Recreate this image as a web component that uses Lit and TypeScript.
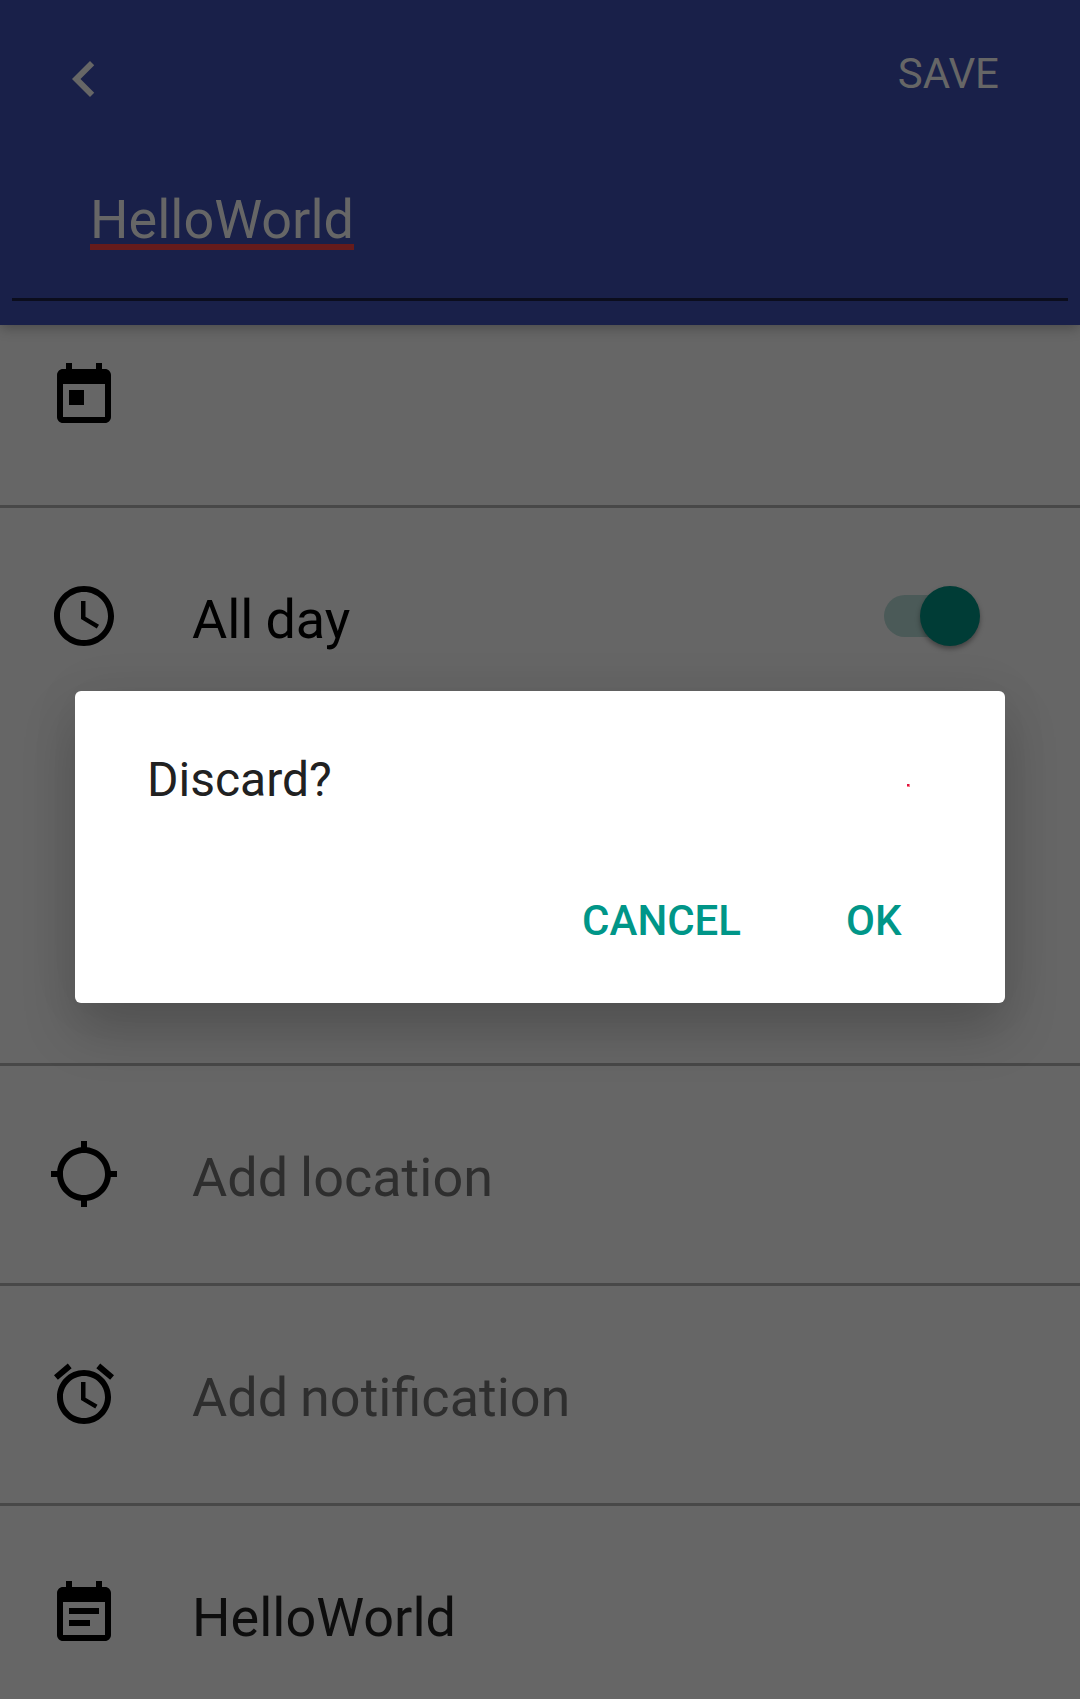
import { LitElement, html, css, svg } from "lit";
import { customElement } from "lit/decorators.js";

const paths = {
  back: "M15.41 7.41L14 6l-6 6 6 6 1.41-1.41L10.83 12z",
  today: "M19 3h-1V1h-2v2H8V1H6v2H5c-1.11 0-1.99.9-1.99 2L3 19c0 1.1.89 2 2 2h14c1.1 0 2-.9 2-2V5c0-1.1-.9-2-2-2zm0 16H5V8h14v11zM7 10h5v5H7z",
  clock: "M11.99 2C6.47 2 2 6.48 2 12s4.47 10 9.99 10C17.52 22 22 17.52 22 12S17.52 2 11.99 2zM12 20c-4.42 0-8-3.58-8-8s3.58-8 8-8 8 3.58 8 8-3.58 8-8 8zm.5-13H11v6l5.25 3.15.75-1.23-4.5-2.67z",
  location: "M20.94 11c-.46-4.17-3.77-7.48-7.94-7.94V1h-2v2.06C6.83 3.52 3.52 6.83 3.06 11H1v2h2.06c.46 4.17 3.77 7.48 7.94 7.94V23h2v-2.06c4.17-.46 7.48-3.77 7.94-7.94H23v-2h-2.06zM12 19c-3.87 0-7-3.13-7-7s3.13-7 7-7 7 3.13 7 7-3.13 7-7 7z",
  alarm: "M22 5.72l-4.6-3.86-1.29 1.53 4.6 3.86L22 5.72zM7.88 3.39L6.6 1.86 2 5.71l1.29 1.53 4.59-3.85zM12.5 8H11v6l4.75 2.85.75-1.23-4-2.37V8zM12 4c-4.97 0-9 4.03-9 9s4.02 9 9 9c4.97 0 9-4.03 9-9s-4.03-9-9-9zm0 16c-3.87 0-7-3.13-7-7s3.13-7 7-7 7 3.13 7 7-3.13 7-7 7z",
  note: "M17 10H7v2h10v-2zm2-7h-1V1h-2v2H8V1H6v2H5c-1.11 0-1.99.9-1.99 2L3 19c0 1.1.89 2 2 2h14c1.1 0 2-.9 2-2V5c0-1.1-.9-2-2-2zm0 16H5V8h14v11zm-5-5H7v2h7v-2z",
};

const icon = (name: keyof typeof paths, cls = "") =>
  html`<svg class="icon ${cls}" viewBox="0 0 24 24">${svg`<path d=${paths[name]}></path>`}</svg>`;

@customElement("app-root")
export class AppRoot extends LitElement {
  static styles = css`
    :host { display: block; font-family: Roboto, sans-serif; }
    * { box-sizing: border-box; }
    .screen { position: relative; height: 1699px; overflow: hidden; background: #666; display: flex; flex-direction: column; }
    .header { height: 325px; flex: none; background: #192049; color: #666; padding: 0 12px; box-shadow: 0 4px 12px -1px rgba(0,0,0,.28); z-index: 1; }
    .bar { height: 158px; display: flex; justify-content: space-between; padding: 43px 69px 0 36px; }
    .icon { width: 72px; height: 72px; flex: none; fill: #000; display: block; }
    .back { fill: #666; }
    .save { font-size: 42px; line-height: 62px; }
    .field { height: 143px; border-bottom: 3px solid #0b0d1d; padding: 30px 78px 0; }
    .name { width: fit-content; height: 62px; font-size: 54px; line-height: 64px; border-bottom: 6px solid #661b1b; }
    .row { flex: none; height: 220px; border-bottom: 3px solid #484848; padding: 72px 100px 0 48px; display: flex; align-items: flex-start; color: #000; font-size: 54px; line-height: 76px; word-spacing: -1.5px; }
    .date { height: 183px; padding-top: 35px; }
    .time { height: 558px; }
    .label { margin: 2px 0 0 72px; flex: 1; }
    .hint { color: #2e2e2e; }
    .dark { color: #0d0d0d; }
    .switch { width: 96px; height: 60px; margin-top: 6px; display: grid; align-items: center; }
    .track, .thumb { grid-area: 1 / 1; }
    .track { width: 84px; height: 42px; border-radius: 21px; background: #4b5a58; }
    .thumb { justify-self: end; width: 60px; height: 60px; border-radius: 50%; background: #003c36; box-shadow: 0 3px 5px rgba(0,0,0,.35); }
    .dialog { position: absolute; left: 75px; top: 691px; width: 930px; height: 312px; background: #fff; border-radius: 6px; z-index: 2; box-shadow: 0 27px 54px rgba(0,0,0,.2), 0 0 54px rgba(0,0,0,.05); padding: 56px 83px 0 72px; }
    .message { display: flex; justify-content: space-between; align-items: center; height: 64px; font-size: 48px; color: #212121; }
    .dot { width: 3px; height: 3px; background: linear-gradient(#e0103f, #e0103f) 0 0 / 2px 2px no-repeat #f77f8c; margin: 13px 12px 0 0; }
    .actions { display: flex; justify-content: flex-end; gap: 105px; padding: 78px 20.5px 0 0; font-size: 42px; line-height: 64px; font-weight: 500; color: #009688; }
  `;

  render() {
    return html`<div class="screen">
      <div class="header">
        <div class="bar">${icon("back", "back")}<span class="save">SAVE</span></div>
        <div class="field"><div class="name">HelloWorld</div></div>
      </div>
      <div class="row date">${icon("today")}</div>
      <div class="row time">${icon("clock")}<span class="label">All day</span><div class="switch"><div class="track"></div><div class="thumb"></div></div></div>
      <div class="row">${icon("location")}<span class="label hint">Add location</span></div>
      <div class="row">${icon("alarm")}<span class="label hint">Add notification</span></div>
      <div class="row">${icon("note")}<span class="label dark">HelloWorld</span></div>
      <div class="dialog">
        <div class="message"><span>Discard?</span><span class="dot"></span></div>
        <div class="actions"><span>CANCEL</span><span>OK</span></div>
      </div>
    </div>`;
  }
}
